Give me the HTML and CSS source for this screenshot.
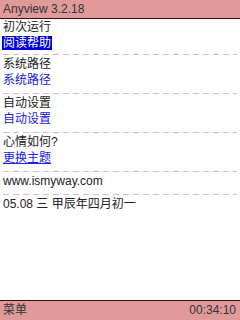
FILE: index.html
```html
<!DOCTYPE html>
<html>
<head>
    <title>Anyview</title>
    <link rel="stylesheet" href="styles.css">
</head>
<body>
    <div class="screen">
        <div class="title-bar">Anyview 3.2.18</div>
        <div class="content">
            <div class="item">
                <div class="line">初次运行</div>
                <div class="line"><span class="selected">阅读帮助</span></div>
            </div>
            <div class="item">
                <div class="line">系统路径</div>
                <div class="line link">系统路径</div>
            </div>
            <div class="item">
                <div class="line">自动设置</div>
                <div class="line link">自动设置</div>
            </div>
            <div class="item">
                <div class="line">心情如何?</div>
                <div class="line link underline">更换主题</div>
            </div>
            <div class="item">
                <div class="line">www.ismyway.com</div>
            </div>
            <div class="item last">
                <div class="line">05.08 三 甲辰年四月初一</div>
            </div>
        </div>
        <div class="status-bar">
            <span>菜单</span>
            <span>00:34:10</span>
        </div>
    </div>
</body>
</html>
```

FILE: styles.css
```css
body {
    margin: 0;
    font-family: "Liberation Sans", "Noto Sans CJK SC", sans-serif;
    font-size: 12px;
    color: #222;
    background-color: #fff;
}
.screen {
    width: 240px;
    height: 320px;
    display: flex;
    flex-direction: column;
}
.title-bar {
    height: 18px;
    line-height: 18px;
    padding-left: 3px;
    background-color: #e09a9a;
    border-bottom: 1px solid #3a0a0a;
    color: #333;
}
.content {
    flex: 1;
    padding: 0 3px;
}
.item {
    padding: 1px 0 6px 0;
    background: repeating-linear-gradient(to right, #e8b4b8 0 6px, transparent 6px 10px) left bottom / 100% 1px no-repeat;
}
.item:first-child {
    padding: 0 0 4px 0;
}
.item.last {
    background: none;
}
.line {
    height: 16px;
    line-height: 16px;
}
.selected {
    display: inline-block;
    line-height: 14px;
    padding: 0 1px;
    margin-left: -1px;
    background-color: #0000e0;
    color: #fff;
}
.link {
    color: #2020e8;
}
.underline {
    text-decoration: underline;
}
.status-bar {
    height: 19px;
    line-height: 19px;
    padding: 0 4px 0 3px;
    background-color: #e09a9a;
    border-top: 1px solid #3a0a0a;
    display: flex;
    justify-content: space-between;
    color: #333;
}
```
